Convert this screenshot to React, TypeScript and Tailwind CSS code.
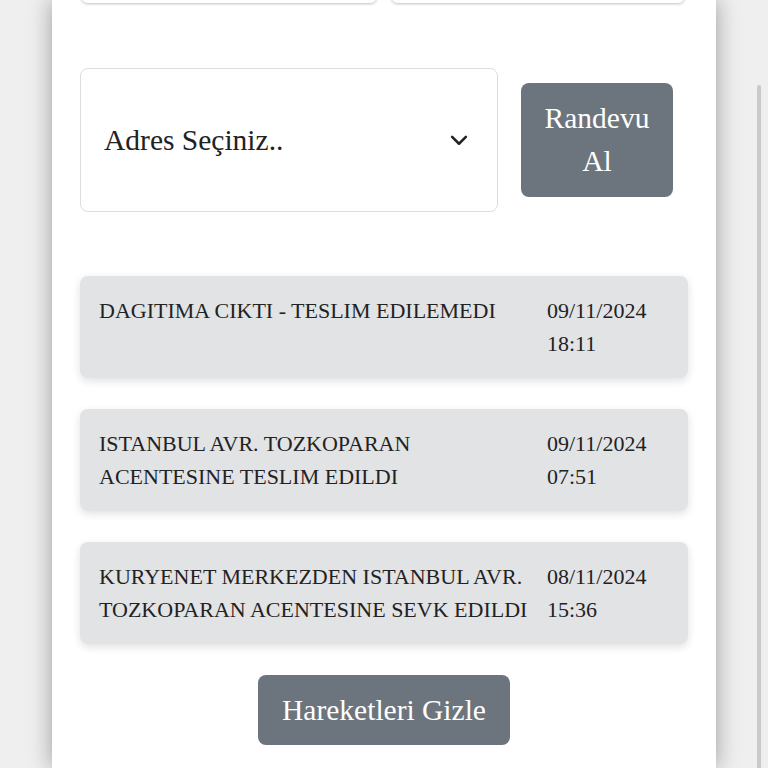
import { Fragment } from 'react';

type Movement = { text: string; date: string; time: string };

const movements: Movement[] = [
  { text: 'DAGITIMA CIKTI - TESLIM EDILEMEDI', date: '09/11/2024', time: '18:11' },
  { text: 'ISTANBUL AVR. TOZKOPARAN ACENTESINE TESLIM EDILDI', date: '09/11/2024', time: '07:51' },
  { text: 'KURYENET MERKEZDEN ISTANBUL AVR. TOZKOPARAN ACENTESINE SEVK EDILDI', date: '08/11/2024', time: '15:36' },
];

function Chevron() {
  return (
    <svg width="20" height="20" viewBox="0 0 16 16" fill="none" stroke="#222" strokeWidth="2" strokeLinecap="round" strokeLinejoin="round">
      <path d="M2.5 5.5l5.5 5.5 5.5-5.5" />
    </svg>
  );
}

function MovementCard({ m }: { m: Movement }) {
  return (
    <div className="rounded-lg bg-[#e2e3e5] px-[19px] py-[18px] shadow-[0_3px_8px_rgba(0,0,0,0.12)]">
      <div className="grid grid-cols-[442px_1fr] gap-x-[6px] text-[22px] leading-[33px] text-[#222]">
        <div>{m.text}</div>
        <div>
          {m.date}
          <br />
          {m.time}
        </div>
      </div>
    </div>
  );
}

export default function App() {
  return (
    <div className="relative h-[768px] overflow-hidden bg-[#efefef]" style={{ fontFamily: '"Liberation Serif", "Times New Roman", serif' }}>
      <div className="mx-auto flex h-full w-[664px] flex-col bg-white px-[28px] shadow-[0_0_22px_rgba(0,0,0,0.35)]">
        {/* inputs cut off at top */}
        <div className="-mt-[40px] flex gap-[12px]">
          <div className="h-[44px] w-[298px] rounded-lg border border-[#d6d6d6] shadow-[0_1px_2px_rgba(0,0,0,0.12)]" />
          <div className="h-[44px] w-[296px] rounded-lg border border-[#d6d6d6] shadow-[0_1px_2px_rgba(0,0,0,0.12)]" />
        </div>

        <div className="mt-[64px] flex items-center gap-[23px]">
          <div className="flex h-[144px] w-[418px] items-center justify-between rounded-lg border border-[#dedede] pl-[23px] pr-[28px]">
            <span className="text-[29.5px] text-[#222]">Adres Seçiniz..</span>
            <Chevron />
          </div>
          <button className="w-[152px] rounded-lg bg-[#6c757d] px-[22px] py-[14px] text-[29.5px] leading-[43px] text-white">
            Randevu Al
          </button>
        </div>

        <div className="mt-[64px] flex flex-col gap-[31px]">
          {movements.map((m, i) => (
            <Fragment key={i}>
              <MovementCard m={m} />
            </Fragment>
          ))}
        </div>

        <div className="mt-[31px] flex justify-center">
          <button className="h-[70px] rounded-lg bg-[#6c757d] px-[24px] text-[29.5px] text-white">
            Hareketleri Gizle
          </button>
        </div>
      </div>

      {/* scrollbar thumb */}
      <div className="absolute right-[7px] top-[85px] h-[700px] w-[4px] rounded-full bg-[#c9c9c9]" />
    </div>
  );
}
